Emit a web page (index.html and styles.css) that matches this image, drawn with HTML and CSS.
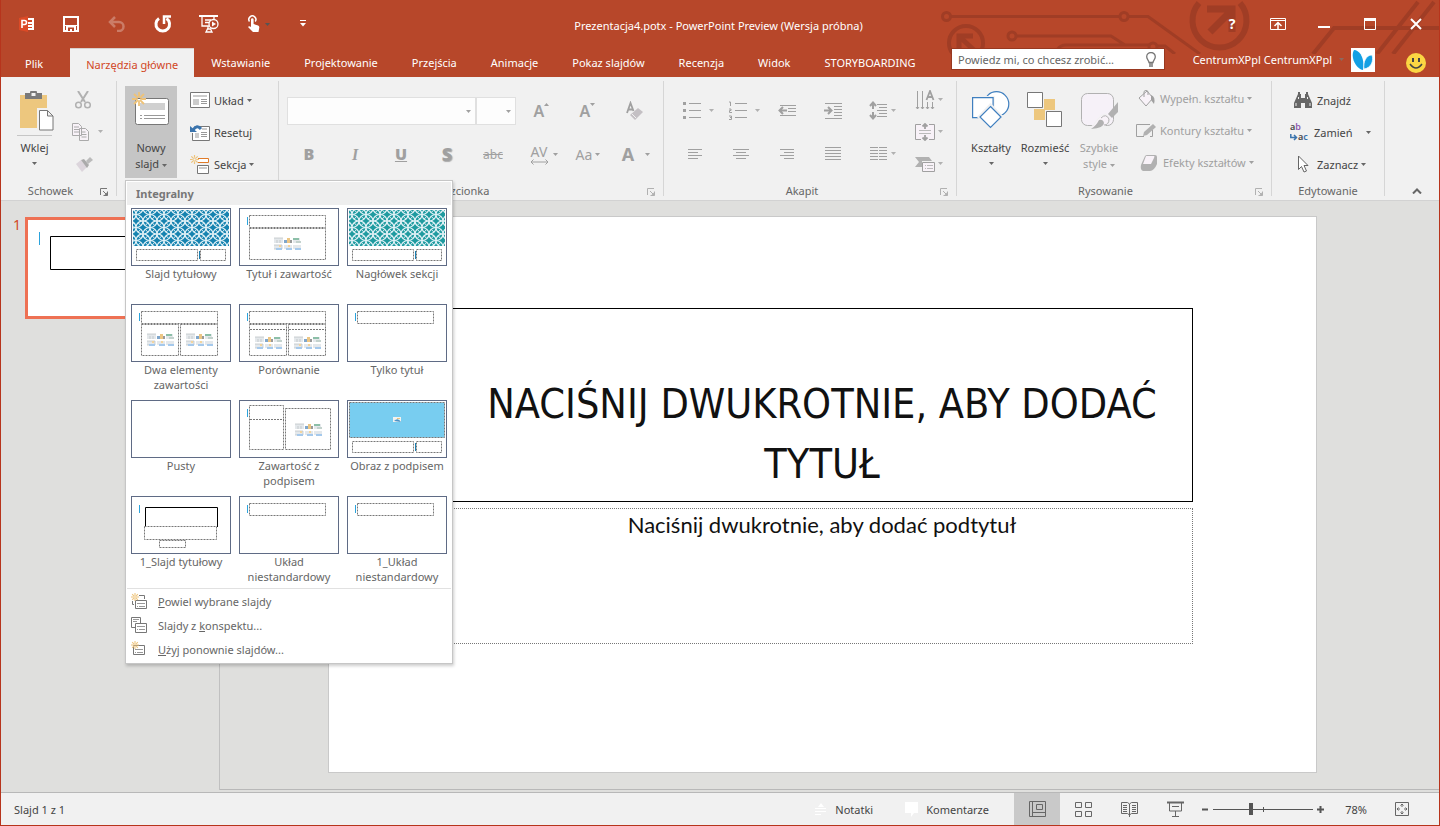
FILE: index.html
```html
<!DOCTYPE html>
<html lang="pl">
<head>
<meta charset="utf-8">
<title>Prezentacja4.potx - PowerPoint Preview (Wersja próbna)</title>
<link rel="stylesheet" href="styles.css">
</head>
<body>
<svg class="defs" aria-hidden="true">
  <defs>
    <symbol id="caret" viewBox="0 0 5 3"><path d="M0 0h5L2.500 3z" fill="currentColor"/></symbol>
    <symbol id="launch" viewBox="0 0 8 8"><path d="M.5 7V.5H7M3 3l4 4M7.500 3.500v4h-4" fill="none" stroke="currentColor"/><path d="M7.500 4v3.500H4z" fill="currentColor"/></symbol>
    <symbol id="media" viewBox="0 0 28 13">
      <path d="M0 1h9v5H0zM19 1h7v5h-7zM0 8h8v4H0zM10 8h8v4h-8zM19 8h8v4h-8z" fill="#e4e8eb"/>
      <path d="M0 1h9M3 3v3M6 3v3M0 8h8v4H0" stroke="#b8bdc0" fill="none" stroke-width=".7"/>
      <path d="M10 3h3v3h-3z" fill="#7fa6cc"/><path d="M13 1h3v5h-3z" fill="#ecc684"/><path d="M16 3h2v3h-2z" fill="#999"/>
      <path d="M19 1h6v2h-6z" fill="#8cbfa8"/><path d="M22 4h5v2h-5z" fill="#c3d2cd"/>
      <path d="M2 11h6v2H2zM12 11h6v2h-6zM21 11h6v2h-6z" fill="#a5c9ec"/><path d="M5 8h2v2H5zM14 8h2v2h-2z" fill="#f3d49c"/>
    </symbol>
    <symbol id="titlebox" viewBox="0 0 98 56"><path d="M9.500 6.500h76v12h-76z" class="dash"/><path d="M7.500 8v8" stroke="#2ba3dc"/></symbol>
    <symbol id="footer" viewBox="0 0 98 56"><path d="M4.500 40.500h61v11h-61zM68.500 40.500h25v11h-25z" class="dash"/><path d="M67.500 42v8" stroke="#1c7fb0"/></symbol>
    <symbol id="star" viewBox="0 0 14 14"><path d="M7 0v4M7 10v4M0 7h4M10 7h4M2 2l3 3M9 9l3 3M12 2L9 5M5 9l-3 3" stroke="#eec37a" stroke-width="1.800" fill="none"/><circle cx="7" cy="7" r="2.200" fill="none" stroke="#eec37a" stroke-width="1.500"/></symbol>
    <pattern id="lattice" x="4" y="-1" width="14" height="13" patternUnits="userSpaceOnUse">
      <g fill="none" stroke="#e4f2f7" stroke-width="1.200">
        <ellipse cx="0" cy="0" rx="7" ry="6.500"/><ellipse cx="14" cy="0" rx="7" ry="6.500"/><ellipse cx="0" cy="13" rx="7" ry="6.500"/><ellipse cx="14" cy="13" rx="7" ry="6.500"/><ellipse cx="7" cy="6.500" rx="7" ry="6.500"/>
        <path d="M2 1.700l3 3M9 8.200l3 3M12 1.700l-3 3M5 8.200l-3 3" stroke-width="1"/>
      </g>
    </pattern>
  </defs>
</svg>
<div class="window">
  <header class="header">
    <svg class="circuit" width="520" height="54" viewBox="0 0 520 54" fill="none" stroke="#a03d25" stroke-width="3" aria-hidden="true">
      <path d="M32 16.500h169M210 16.500h19L281 54M98 36h94l14 9M138 50q3-5 9-5h83M238 46h8l10 8"/>
      <circle cx="27.500" cy="16.500" r="4"/><circle cx="205" cy="16.500" r="4"/><circle cx="93" cy="36" r="4"/><circle cx="234" cy="47" r="4"/>
      <circle cx="47" cy="43" r="17" stroke-width="4"/><path d="M57 52L42 38M40 50V36h14" stroke-width="5"/>
      <path d="M280 3a27 27 0 1041 0" stroke-width="6"/><path d="M291 32l22-22M288 9h25v23" stroke-width="7"/>
      <path d="M394 54l21-26h105M458 54L499 2M474 54L515 2" stroke-width="4"/>
    </svg>
    <div class="titlebar">
      <div class="quick">
        <button class="q q-app" aria-label="PowerPoint"><svg width="16" height="16" viewBox="0 0 16 16"><path d="M0 2l9-2v16l-9-2z" fill="#dc4a26"/><path d="M9 2h6v12H9z" fill="#fff"/><path d="M9 4h4v2H9zM9 8h4v1H9zM9 11h4v1H9z" fill="#d24726"/><path d="M3 12V4.500h2.500a2 2 0 010 4H3" fill="none" stroke="#fff" stroke-width="1.600"/></svg></button>
        <button class="q" aria-label="Zapisz"><svg width="16" height="16" viewBox="0 0 16 16"><path d="M1 1h14v14H1z" fill="none" stroke="#fff" stroke-width="2"/><path d="M1 9.500h14" stroke="#fff"/><path d="M3 10h10v5H3z" fill="#fff"/><path d="M5 11.500h6V15H9v-2H7v2H5z" fill="#b7472a"/></svg></button>
        <button class="q" aria-label="Cofnij"><svg width="18" height="16" viewBox="0 0 18 16" fill="none" stroke="#cb7c67" stroke-width="2.500"><path d="M7 1L2 6l5 5M2 6h9a4.500 4.500 0 010 9H9"/></svg></button>
        <button class="q" aria-label="Ponów"><svg width="18" height="18" viewBox="0 0 18 18" fill="none" stroke="#fff" stroke-width="3"><path d="M5 3.500a6.800 6.800 0 107.500 0"/><path d="M10 9V1.500h7" stroke-width="2.500"/></svg></button>
        <button class="q" aria-label="Pokaz slajdów"><svg width="20" height="18" viewBox="0 0 20 18" fill="none" stroke="#fff" stroke-width="1.300"><path d="M0 1h19" stroke-width="2"/><path d="M3 2v9h7M15 2v2M6 5h6M6 7.500h4M9 11v3"/><circle cx="14.500" cy="9" r="4.500"/><path d="M13 6.500v5l4-2.500z" fill="#fff" stroke="none"/><path d="M7 17l1.500-3h3l1.500 3z"/></svg></button>
        <button class="q q-touch" aria-label="Tryb dotyku"><svg width="24" height="18" viewBox="0 0 24 18"><path d="M5 10V4.500a1.300 1.300 0 012.600 0V9l4.500 1.500q1.400.5 1.200 2L12.500 17H7l-5-5q1-1.500 3 0z" fill="#fff"/><path d="M3.500 6.500a3.500 3.500 0 115.700 0" fill="none" stroke="#fff" stroke-width="1.500"/><path d="M19 8h5l-2.500 3z" fill="#555"/></svg></button>
        <button class="q" aria-label="Dostosuj pasek"><svg width="6" height="7" viewBox="0 0 6 7"><path d="M0 .5h6" stroke="#fff"/><path d="M0 3h6L3 6.500z" fill="#fff"/></svg></button>
      </div>
      <h1 class="doc-title">Prezentacja4.potx - PowerPoint Preview (Wersja próbna)</h1>
      <div class="wincontrols">
        <button class="q help" aria-label="Pomoc">?</button>
        <button class="q" aria-label="Opcje wstążki"><svg width="16" height="12" viewBox="0 0 16 12" fill="none" stroke="#fff"><path d="M.5.5h15v11H.5zM0 2.500h16"/><path d="M8 11V5M4.500 8L8 4.500 11.500 8" stroke-width="1.500"/></svg></button>
        <button class="q" aria-label="Minimalizuj"><svg width="12" height="12" viewBox="0 0 12 12"><path d="M0 8h12v2H0z" fill="#fff"/></svg></button>
        <button class="q" aria-label="Maksymalizuj"><svg width="12" height="12" viewBox="0 0 12 12"><path d="M.5 1v10.500h11V1" fill="none" stroke="#fff"/><path d="M0 0h12v3H0z" fill="#fff"/></svg></button>
        <button class="q" aria-label="Zamknij"><svg width="12" height="12" viewBox="0 0 12 12"><path d="M1 1l10 10M11 1L1 11" stroke="#fff" stroke-width="2"/></svg></button>
      </div>
    </div>
    <div class="tabrow">
      <nav class="tabs">
        <button class="tab tab-file">Plik</button>
        <button class="tab active">Narzędzia główne</button>
        <button class="tab">Wstawianie</button>
        <button class="tab">Projektowanie</button>
        <button class="tab">Przejścia</button>
        <button class="tab">Animacje</button>
        <button class="tab">Pokaz slajdów</button>
        <button class="tab">Recenzja</button>
        <button class="tab">Widok</button>
        <button class="tab">STORYBOARDING</button>
      </nav>
      <label class="tell"><input type="text" placeholder="Powiedz mi, co chcesz zrobić..." aria-label="Powiedz mi, co chcesz zrobić"><svg width="10" height="15" viewBox="0 0 10 15" fill="none" stroke="#777"><path d="M3 10.500c0-2-2.300-3-2.300-5.700a4.300 4.300 0 018.600 0c0 2.700-2.300 3.700-2.300 5.700z" stroke-width="1.300"/><path d="M3 12h4M3 14h4" stroke-width="1.500"/></svg></label>
      <button class="account">CentrumXPpl CentrumXPpl<svg class="caret" width="5" height="3"><use href="#caret"/></svg></button>
      <svg class="avatar" width="24" height="24" viewBox="0 0 24 24" role="img" aria-label="Avatar"><path d="M0 0h24v24H0z" fill="#fff"/><path d="M3 2c6 0 11 9 9 20C5 21-1 9 3 2z" fill="#14a0e4"/><path d="M21 7c-6 0-9 7-8 14 7-1 10-8 8-14z" fill="#14a0e4" stroke="#fff" stroke-width=".7"/></svg>
      <svg class="smile" width="20" height="20" viewBox="0 0 20 20" role="img" aria-label="Opinia"><circle cx="10" cy="10" r="10" fill="#fbd643"/><path d="M7 5v4M13 5v4" stroke="#444" stroke-width="2"/><path d="M4 11q6 8 12 0" fill="none" stroke="#444" stroke-width="1.500"/></svg>
    </div>
  </header>

  <section class="ribbon" aria-label="Wstążka">
    <div class="group g-clip">
      <div class="body">
        <button class="big paste"><svg width="36" height="40" viewBox="0 0 36 40"><path d="M1 4h27v33H1z" fill="#edc77e"/><path d="M6 2h5V1q0-1 1-1h5q1 0 1 1v1h5v6H6z" fill="#7a7a7a"/><path d="M12.500 2h4v3h-4z" fill="#f1f1f1"/><path d="M18 17h12l5 5v18H18z" fill="#f1f1f1"/><path d="M20.500 19.500h8l5.500 5.500v14H20.500zM28.500 19.500V25H34" fill="#fff" stroke="#777"/></svg><span class="split">Wklej</span><svg class="caret" width="5" height="3"><use href="#caret"/></svg></button>
        <div class="stack off">
          <button class="ico" aria-label="Wytnij"><svg width="22" height="18" viewBox="0 0 22 18" fill="none" stroke="#b1b1b1" stroke-width="1.500"><path d="M6 0l7 11M16 0L9 11" stroke-width="2"/><circle cx="6.500" cy="14" r="2.800"/><circle cx="15.500" cy="14" r="2.800"/></svg></button>
          <button class="ico" aria-label="Kopiuj"><svg width="32" height="18" viewBox="0 0 32 18"><path d="M.5.500h6l3 3v9h-9zM7.500 5.500h6l3 3v9h-9z" fill="#f8f2f8" stroke="#aaa"/><path d="M2 4h5M2 6.500h5M2 9h5M9.500 9h4M9.500 11.500h5M9.500 14h5" stroke="#aaa"/><path d="M26 7h5l-2.500 3z" fill="#b1b1b1"/></svg></button>
          <button class="ico" aria-label="Malarz formatów"><svg width="22" height="16" viewBox="0 0 22 16"><path d="M4 8l5-4 6 7-5 5z" fill="#dcd5dc"/><path d="M9 4l3-1 5 6-2 3z" fill="#aaa"/><path d="M14 5l4-4 3 3-5 4" fill="#bbb"/></svg></button>
        </div>
      </div>
      <div class="caption">Schowek<svg class="launch" width="8" height="8"><use href="#launch"/></svg></div>
    </div>

    <div class="group g-slides">
      <div class="body">
        <div class="newslide">
          <button class="big pressed" aria-expanded="true"><svg width="38" height="37" viewBox="0 0 38 37"><rect x="3.500" y="7.500" width="33" height="26" rx="2" fill="#fff" stroke="#777"/><path d="M8 12h25v7H8z" fill="#d0d0d0"/><path d="M12 24.500h21M12 27.500h21M8 24.500h2M8 27.500h2" stroke="#999"/><use href="#star" x="0" y="1" width="14" height="14"/></svg><span>Nowy<br>slajd <svg class="caret" width="5" height="3"><use href="#caret"/></svg></span></button>
          <div class="menu">
            <h2>Integralny</h2>
            <div class="gallery">
              <button class="card"><svg class="thumb" viewBox="0 0 98 56"><path d="M1 1h96v36H1z" fill="#1683b0"/><path d="M1 1h96v36H1z" fill="url(#lattice)"/><use href="#footer"/></svg>Slajd tytułowy</button>
              <button class="card"><svg class="thumb" viewBox="0 0 98 56"><use href="#titlebox"/><path d="M9.500 19.500h76v31h-76z" class="dash"/><use href="#media" x="34" y="28" width="28" height="13"/></svg>Tytuł i zawartość</button>
              <button class="card"><svg class="thumb" viewBox="0 0 98 56"><path d="M1 1h96v36H1z" fill="#1f9ba0"/><path d="M1 1h96v36H1z" fill="url(#lattice)"/><use href="#footer"/></svg>Nagłówek sekcji</button>
              <button class="card"><svg class="thumb" viewBox="0 0 98 56"><use href="#titlebox"/><path d="M9.500 19.500h37v31h-37zM48.500 19.500h37v31h-37z" class="dash"/><use href="#media" x="15" y="28" width="28" height="13"/><use href="#media" x="54" y="28" width="28" height="13"/></svg>Dwa elementy zawartości</button>
              <button class="card"><svg class="thumb" viewBox="0 0 98 56"><use href="#titlebox"/><path d="M9.500 19.500h37v31h-37zM48.500 19.500h37v31h-37zM10 24.500h37M49 24.500h37" class="dash"/><use href="#media" x="15" y="31" width="28" height="13"/><use href="#media" x="54" y="31" width="28" height="13"/></svg>Porównanie</button>
              <button class="card"><svg class="thumb" viewBox="0 0 98 56"><use href="#titlebox"/></svg>Tylko tytuł</button>
              <button class="card"><svg class="thumb" viewBox="0 0 98 56"></svg>Pusty</button>
              <button class="card"><svg class="thumb" viewBox="0 0 98 56"><path d="M9.500 4.500h34v44h-34zM10 18.500h34M45.500 7.500h45v41h-45z" class="dash"/><path d="M7.500 8v8" stroke="#2ba3dc"/><use href="#media" x="55" y="22" width="28" height="13"/></svg>Zawartość z podpisem</button>
              <button class="card"><svg class="thumb" viewBox="0 0 98 56"><path d="M1.500 1.500h95v35h-95z" fill="#78cdf0"/><path d="M1.500 1.500h95v35h-95z" class="dash"/><path d="M45 16h8v5h-8z" fill="#f2f2f0"/><path d="M46 20q4-4 7 1z" fill="#4c93c6"/><path d="M49 17h3v1h-3z" fill="#edc77e"/><use href="#footer"/></svg>Obraz z podpisem</button>
              <button class="card"><svg class="thumb" viewBox="0 0 98 56"><path d="M7.500 8v8" stroke="#2ba3dc"/><path d="M13.500 30V10.500h72V30" fill="none" stroke="#000"/><path d="M12.500 29.500h72v13h-72zM27.500 43.500h26v7h-26z" class="dash"/></svg>1_Slajd tytułowy</button>
              <button class="card"><svg class="thumb" viewBox="0 0 98 56"><use href="#titlebox"/></svg>Układ niestandardowy</button>
              <button class="card"><svg class="thumb" viewBox="0 0 98 56"><use href="#titlebox"/></svg>1_Układ niestandardowy</button>
            </div>
            <div class="commands">
              <button><svg width="16" height="16" viewBox="0 0 16 16"><path d="M4.500 7.500h11v8h-11z" fill="#fff" stroke="#777"/><path d="M6 10.500h8M6 13.500h1M8 13.500h6" stroke="#999"/><path d="M8 2.500h5.500V6M1.500 8v3.500H3" fill="none" stroke="#777"/><use href="#star" width="8" height="8"/></svg><span><u>P</u>owiel wybrane slajdy</span></button>
              <button><svg width="16" height="16" viewBox="0 0 16 16"><path d="M.5.500h9v10h-9z" fill="#fff" stroke="#777"/><path d="M2 2.500h6M2 4.500h4" stroke="#999"/><path d="M4.500 6.500h11v9h-11z" fill="#fff" stroke="#777"/><path d="M6 9.500h8M6 12.500h1M8 12.500h6" stroke="#999"/></svg><span>Slajdy z <u>k</u>onspektu...</span></button>
              <button><svg width="16" height="16" viewBox="0 0 16 16"><path d="M2.500 4.500h11v9h-11z" fill="#fff" stroke="#777"/><path d="M4 8.500h8M4 11.500h1M6 11.500h6" stroke="#999"/><use href="#star" width="8" height="8"/></svg><span><u>U</u>żyj ponownie slajdów...</span></button>
            </div>
          </div>
        </div>
        <div class="stack rows">
          <button><svg width="20" height="16" viewBox="0 0 20 16"><path d="M.5.500h19v15H.5z" fill="#fff" stroke="#777"/><path d="M3 3h14v2H3zM3 7h6v6H3z" fill="#ccc"/><path d="M11 7.500h6M11 9.500h6M11 11.500h6" stroke="#999"/></svg>Układ<svg class="caret" width="5" height="3"><use href="#caret"/></svg></button>
          <button><svg width="20" height="17" viewBox="0 0 20 17"><path d="M4.500 2.500h15v14H2.500V9" fill="#fff" stroke="#777"/><path d="M5 9h4v5H5zM12 4h5v2h-5z" fill="#ccc"/><path d="M11 8.500h6M11 10.500h6M11 12.500h6" stroke="#999"/><path d="M3 6q4-6 8-1" fill="none" stroke="#3b74ad" stroke-width="3"/><path d="M0 2v6h7z" fill="#3b74ad"/></svg>Resetuj</button>
          <button><svg width="20" height="19" viewBox="0 0 20 19"><path d="M8 3.500h10.500v4H8" fill="#fff" stroke="#e07b28"/><path d="M7.500 10.500h11v8h-11z" fill="#fff" stroke="#777"/><path d="M9 12h8v2H9z" fill="#ccc"/><use href="#star" width="9" height="9"/></svg>Sekcja<svg class="caret" width="5" height="3"><use href="#caret"/></svg></button>
        </div>
      </div>
    </div>

    <div class="group g-font">
      <div class="body fontgrid off">
        <div class="combos">
          <span class="combo wide"><select aria-label="Czcionka" disabled><option></option></select><svg class="caret" width="5" height="3"><use href="#caret"/></svg></span>
          <span class="combo"><select aria-label="Rozmiar" disabled><option></option></select><svg class="caret" width="5" height="3"><use href="#caret"/></svg></span>
        </div>
        <button class="t16" aria-label="Zwiększ rozmiar">A<svg class="sup" width="5" height="3" viewBox="0 0 5 3"><path d="M0 3h5L2.500 0z" fill="#a0a0a0"/></svg></button>
        <button class="t16" aria-label="Zmniejsz rozmiar">A<svg class="sup" width="5" height="3"><use href="#caret"/></svg></button>
        <button class="clear" aria-label="Wyczyść formatowanie"><svg width="18" height="20" viewBox="0 0 18 20"><path d="M1 12L4.500 2l3 8M2.500 8.500h4" fill="none" stroke="#a0a0a0" stroke-width="1.800"/><path d="M4 14l8-7 5 4-8 8z" fill="#c4c0c4"/><path d="M6 13l4 4" stroke="#f1f1f1"/></svg></button>
        <button class="t16"><b>B</b></button>
        <button class="t16 ital"><i>I</i></button>
        <button class="t16"><b><u>U</u></b></button>
        <button class="t18 shadow"><b>S</b></button>
        <button class="t13"><s>abc</s></button>
        <button class="av">AV<svg width="19" height="6" viewBox="0 0 19 6"><path d="M1 3h17M3.500.500L1 3l2.500 2.500M15.500.500L18 3l-2.500 2.500" fill="none" stroke="#a0a0a0"/></svg><svg class="caret" width="5" height="3"><use href="#caret"/></svg></button>
        <button class="t15">Aa<svg class="caret" width="5" height="3"><use href="#caret"/></svg></button>
        <button class="t18 color">A<svg class="caret" width="5" height="3"><use href="#caret"/></svg></button>
      </div>
      <div class="caption">Czcionka<svg class="launch off" width="8" height="8"><use href="#launch"/></svg></div>
    </div>

    <div class="group g-para">
      <div class="body paragrid off">
        <div class="lines">
          <button aria-label="Punktory"><svg width="46" height="20" viewBox="0 0 46 20"><path d="M8 1h3v3H8zM8 8h3v3H8zM8 15h3v3H8z" fill="#a0a0a0"/><path d="M14 2.500h12M14 9.500h12M14 16.500h12" stroke="#a0a0a0"/><path d="M34 8h5l-2.500 3z" fill="#b1b1b1"/></svg></button>
          <button aria-label="Numerowanie"><svg width="46" height="20" viewBox="0 0 46 20" fill="none" stroke="#a0a0a0"><path d="M8 1h1.500v4M8 8h2v1.500H8.500v2H11M8 15h2.500v3.500H8M9 16.500h1.500M14 2.500h12M14 9.500h12M14 16.500h12"/><path d="M34 8h5l-2.500 3z" fill="#b1b1b1" stroke="none"/></svg></button>
          <button aria-label="Zmniejsz wcięcie"><svg width="46" height="20" viewBox="0 0 46 20"><path d="M13 4.500h16M21 7.500h8M21 10.500h8M13 14.500h16" stroke="#a0a0a0"/><path d="M20 9.500h-7M16 6l-3.500 3.500L16 13" fill="none" stroke="#a0a0a0" stroke-width="2"/></svg></button>
          <button aria-label="Zwiększ wcięcie"><svg width="46" height="20" viewBox="0 0 46 20"><path d="M12 2.500h17M21 5.500h8M21 8.500h8M21 11.500h8M21 14.500h8M12 17.500h17" stroke="#a0a0a0"/><path d="M11 9.500h7M15 6l3.500 3.500L15 13" fill="none" stroke="#a0a0a0" stroke-width="2"/></svg></button>
          <button aria-label="Interlinia"><svg width="46" height="20" viewBox="0 0 46 20"><path d="M18 3.500h10M20 6.500h8M18 9.500h10M20 12.500h8M18 15.500h10" stroke="#a0a0a0"/><path d="M14 2v6M11 5l3-3.500L17 5M14 11v6M11 14l3 3.500 3-3.500" fill="none" stroke="#a0a0a0" stroke-width="2"/><path d="M32 8h5l-2.500 3z" fill="#b1b1b1"/></svg></button>
          <button aria-label="Do lewej"><svg width="46" height="20" viewBox="0 0 46 20"><path d="M13 5.500h14M13 8.500h10M13 11.500h14M13 14.500h10" stroke="#a0a0a0"/></svg></button>
          <button aria-label="Do środka"><svg width="46" height="20" viewBox="0 0 46 20"><path d="M12 5.500h16M15 8.500h10M12 11.500h16M15 14.500h10" stroke="#a0a0a0"/></svg></button>
          <button aria-label="Do prawej"><svg width="46" height="20" viewBox="0 0 46 20"><path d="M13 5.500h14M17 8.500h10M13 11.500h14M17 14.500h10" stroke="#a0a0a0"/></svg></button>
          <button aria-label="Wyjustuj"><svg width="46" height="20" viewBox="0 0 46 20"><path d="M12 3.500h16M12 6.500h16M12 9.500h16M12 12.500h16M12 15.500h16" stroke="#a0a0a0"/></svg></button>
          <button aria-label="Kolumny"><svg width="46" height="20" viewBox="0 0 46 20"><path d="M11 3.500h8M11 6.500h8M11 9.500h8M11 12.500h8M11 15.500h8M20 3.500h8M20 6.500h8M20 9.500h8M20 12.500h8M20 15.500h8" stroke="#a0a0a0"/><path d="M32 8h5l-2.500 3z" fill="#b1b1b1"/></svg></button>
        </div>
        <div class="stack">
          <button class="ico" aria-label="Kierunek tekstu"><svg width="28" height="20" viewBox="0 0 28 20" fill="none" stroke="#a0a0a0"><path d="M2.500 1v18M7.500 1v18M12.500 12v7M17.500 12v7M1 17l1.500 2L4 17M6 17l1.500 2L9 17M11 17l1.500 2 1.500-2M16 17l1.500 2 1.500-2"/><path d="M11.500 10L15 1l3.500 9M13 7h4" stroke-width="1.800"/><path d="M23 8h5l-2.500 3z" fill="#b1b1b1" stroke="none"/></svg></button>
          <button class="ico" aria-label="Wyrównaj tekst"><svg width="28" height="18" viewBox="0 0 28 18"><path d="M1 1.500h18v15H1z" fill="#f8f2f8"/><path d="M6 1.500H.5v15H6M14 1.500h5.500v15H14" fill="none" stroke="#a0a0a0"/><path d="M4 7.500h12M4 10.500h12" stroke="#bbb"/><path d="M10 1v5M7.500 3.500L10 1l2.500 2.500M10 12v5M7.500 14.500L10 17l2.500-2.500" fill="none" stroke="#a0a0a0" stroke-width="1.800"/><path d="M23 7h5l-2.500 3z" fill="#b1b1b1"/></svg></button>
          <button class="ico" aria-label="SmartArt"><svg width="28" height="16" viewBox="0 0 28 16"><path d="M0 1h14l3 4H7v6H0l4-5z" fill="#b1b1b1"/><path d="M7.500 6.500h12v9h-12z" fill="#f8f2f8" stroke="#a0a0a0"/><path d="M10 9.500h1M12 9.500h6M10 12.500h1M12 12.500h6" stroke="#bbb"/><path d="M23 6h5l-2.500 3z" fill="#b1b1b1"/></svg></button>
        </div>
      </div>
      <div class="caption">Akapit<svg class="launch off" width="8" height="8"><use href="#launch"/></svg></div>
    </div>

    <div class="group g-draw">
      <div class="body">
        <button class="big"><svg width="38" height="38" viewBox="0 0 38 38" fill="#fff" stroke="#3f7fbf" stroke-width="1.200"><circle cx="24.500" cy="13" r="12.300"/><path d="M.6 6.600h20.500v20H.6z" stroke="#f1f1f1" stroke-width="3"/><path d="M.6 6.600h20.500v20H.6z"/><path d="M18.500 14l11.500 12-11.500 11.500L7 26z" stroke="#f1f1f1" stroke-width="3"/><path d="M18.500 15.500l10.500 10.500-10.500 10.500L8 26z"/></svg><span>Kształty</span><svg class="caret" width="5" height="3"><use href="#caret"/></svg></button>
        <button class="big"><svg width="36" height="38" viewBox="0 0 36 38"><path d="M17 8h11v11H17zM7 18h11v11H7z" fill="#edc77e"/><path d="M.5 1.500h15v15H.5zM19.500 20.500h15v15h-15z" fill="#fff" stroke="#777"/></svg><span>Rozmieść</span><svg class="caret" width="5" height="3"><use href="#caret"/></svg></button>
        <button class="big off"><svg width="38" height="38" viewBox="0 0 38 38"><rect x="1.500" y="2.500" width="32" height="32" rx="6" fill="#f6f1f8" stroke="#b1b1b1"/><path d="M38 11v10l-6 6-4-4z" fill="#b1b1b1"/><path d="M26 23l5 5q-4 10-22 9 5-2 8-8 4-6 9-6z" fill="#f8f2f8" stroke="#f1f1f1"/><path d="M11 38q5-3 8-9 4-1 5 3 0 5-13 6z" fill="#b1b1b1"/><path d="M21 27q5-5 8 1 0 6-5 6" fill="none" stroke="#b1b1b1"/></svg><span>Szybkie<br>style <svg class="caret" width="5" height="3"><use href="#caret"/></svg></span></button>
        <div class="stack rows off">
          <button><svg width="20" height="16" viewBox="0 0 20 16"><path d="M3 8l8-7 6 7-7 8z" fill="#f8f2f8" stroke="#a0a0a0"/><path d="M8 7V1.500q2-3 4 0V5" fill="none" stroke="#a0a0a0"/><path d="M15 5q5 2 3 9l-3-4z" fill="#a0a0a0"/></svg>Wypełn. kształtu<svg class="caret" width="5" height="3"><use href="#caret"/></svg></button>
          <button><svg width="20" height="15" viewBox="0 0 20 15"><path d="M14 1.500H.5v12H8M16.500 7v6.500H14" fill="none" stroke="#a0a0a0"/><path d="M7 13l1-4 9-8 3 3-9 8z" fill="#b1b1b1"/></svg>Kontury kształtu<svg class="caret" width="5" height="3"><use href="#caret"/></svg></button>
          <button class="fx"><svg width="20" height="17" viewBox="0 0 20 17"><path d="M2 11L6 2q1-1 2-1h8q2 0 2 2v7q-3 7-7 7H4q-3-1-2-6z" fill="#b1b1b1"/><path d="M7 2h8q1 0 0 2l-3 6H4z" fill="#f8f2f8"/></svg>Efekty kształtów<svg class="caret" width="5" height="3"><use href="#caret"/></svg></button>
        </div>
      </div>
      <div class="caption">Rysowanie<svg class="launch off" width="8" height="8"><use href="#launch"/></svg></div>
    </div>

    <div class="group g-edit">
      <div class="body">
        <div class="stack rows">
          <button><svg width="20" height="17" viewBox="0 0 20 17"><path d="M5 2h3v4h4V2h3l4 9v5h-7v-5H8v5H1v-5z" fill="#666"/><path d="M5 0h2v3H5zM13 0h2v3h-2z" fill="#666"/><path d="M3 11v3M17 11v3M5.500 5v2M14.500 5v2" stroke="#f1f1f1"/></svg>Znajdź</button>
          <button class="swap"><span class="abac"><b>a<i>b</i></b><b><svg width="8" height="7" viewBox="0 0 8 7"><path d="M.8 0v3.500H6M4 1l2.500 2.500L4 6" fill="none" stroke="#3b74ad" stroke-width="1.500"/></svg>a<em>c</em></b></span>Zamień<svg class="caret far" width="5" height="3"><use href="#caret"/></svg></button>
          <button><svg width="20" height="18" viewBox="0 0 20 18"><path d="M5.500 1v13.500l3-3 2.500 5.500 2.500-1-2.500-5.500h4z" fill="#fff" stroke="#666"/></svg>Zaznacz<svg class="caret" width="5" height="3"><use href="#caret"/></svg></button>
        </div>
      </div>
      <div class="caption">Edytowanie</div>
    </div>
    <button class="collapse" aria-label="Zwiń wstążkę"><svg width="10" height="6" viewBox="0 0 10 6"><path d="M1 5.500l4-4 4 4" fill="none" stroke="#666" stroke-width="2"/></svg></button>
  </section>

  <main class="work">
    <aside class="pane">
      <span class="num">1</span>
      <svg class="mini" viewBox="0 0 171 96" role="img" aria-label="Slajd 1"><path d="M11.500 12v13" stroke="#2ba3dc"/><path d="M22.500 16.500h127v33h-127z" fill="none" stroke="#000"/></svg>
    </aside>
    <div class="editor">
      <article class="slide">
        <h2 class="slide-title">NACIŚNIJ DWUKROTNIE, ABY DODAĆ TYTUŁ</h2>
        <p class="slide-sub">Naciśnij dwukrotnie, aby dodać podtytuł</p>
      </article>
    </div>
  </main>

  <footer class="status">
    <span class="count">Slajd 1 z 1</span>
    <button class="notes"><svg width="12" height="14" viewBox="0 0 12 14"><path d="M3 5h6L6 1zM0 6h11v1H0zM0 9h11v1H0zM0 12h6v1H0z" fill="#fff"/></svg>Notatki</button>
    <button class="notes"><svg width="13" height="15" viewBox="0 0 13 15"><path d="M0 0h13v11H9l-3 4v-4H0z" fill="#fff"/></svg>Komentarze</button>
    <div class="views">
      <button class="on" aria-label="Normalny"><svg width="17" height="16" viewBox="0 0 17 16" fill="none" stroke="#666"><path d="M.5.500h16v15H.5zM3.500 0v16M4 11.500h12M7.500 3.500h6v5h-6z"/></svg></button>
      <button aria-label="Sortowanie"><svg width="17" height="16" viewBox="0 0 17 16" fill="none" stroke="#666"><path d="M.5 1.500h6v5h-6zM10.500 1.500h6v5h-6zM.5 10.500h6v5h-6zM10.500 10.500h6v5h-6z"/></svg></button>
      <button aria-label="Czytanie"><svg width="17" height="16" viewBox="0 0 17 16" fill="none" stroke="#666"><path d="M.5 1.500h6l2 1.500 2-1.500h6v11h-6l-2 1.500-2-1.500h-6zM8.500 3v13M2 4.500h4M2 6.500h4M2 8.500h4M2 10.500h4M11 4.500h4M11 6.500h4M11 8.500h4M11 10.500h4"/></svg></button>
      <button aria-label="Pokaz slajdów"><svg width="17" height="16" viewBox="0 0 17 16" fill="none" stroke="#666"><path d="M0 1.500h17" stroke-width="2"/><path d="M2.500 2v8h12V2M5 5.500h7M8.500 10v5M5 15.500h7"/></svg></button>
    </div>
    <button class="pm" aria-label="Pomniejsz"><svg width="9" height="9" viewBox="0 0 9 9"><path d="M1 4.500h6" stroke="#555" stroke-width="2"/></svg></button>
    <input class="zoom" type="range" min="0" max="100" value="38" aria-label="Powiększenie">
    <button class="pm" aria-label="Powiększ"><svg width="9" height="9" viewBox="0 0 9 9"><path d="M1 4.500h7M4.500 1v7" stroke="#555" stroke-width="2"/></svg></button>
    <button class="pct">78%</button>
    <button class="fit" aria-label="Dopasuj"><svg width="14" height="14" viewBox="0 0 14 14" fill="none" stroke="#666"><path d="M.5.500h13v13H.5zM7 2v3M7 9v3M2 7h3M9 7h3M5.500 3.500L7 2l1.500 1.500M5.500 10.500L7 12l1.500-1.500M3.500 5.500L2 7l1.500 1.500M10.500 5.500L12 7l-1.500 1.500"/></svg></button>
  </footer>
</div>
</body>
</html>
```
FILE: styles.css
```css
* { box-sizing: border-box; }
body { margin: 0; font: 11px/15px "Noto Sans", "Open Sans", sans-serif; color: #444; }
button, input, select { font: inherit; color: inherit; background: none; border: 0; padding: 0; margin: 0; }
button { display: flex; align-items: center; white-space: nowrap; }
h1, h2, p { margin: 0; font-weight: 400; }
.defs { position: absolute; width: 0; height: 0; }
.dash { fill: none; stroke: #777; stroke-dasharray: 2 1; }
.caret { flex: none; color: #666; }
.off, .off .caret { color: #a0a0a0; }

.window { display: flex; flex-direction: column; height: 100vh; border: 1px solid #b7341c; border-top: 0; background: #dfdfdd; }

.header { position: relative; background: #b7472a; color: #fff; }
.circuit { position: absolute; right: 0; top: 0; }
.titlebar, .tabrow { position: relative; display: flex; }
.titlebar { height: 47px; align-items: center; }
.quick, .wincontrols { display: flex; flex: 1; }
.quick { padding-left: 3px; }
.wincontrols { justify-content: flex-end; }
.q { width: 46px; height: 46px; justify-content: center; }
.q-app { width: 44px; padding-left: 2px; }
.q-touch { width: 48px; padding-left: 4px; }
.help { font-weight: 700; font-size: 14px; }
.doc-title { font-size: 11px; line-height: 15px; padding: 4px 6px 0 0; }
.tabrow { height: 30px; align-items: flex-start; padding-right: 13px; }
.tabs { display: flex; flex: 1; padding: 1px 0 0 6px; }
.tab { height: 29px; padding: 2px 17px; color: #fff; }
.tab-file { padding: 2px 27px 0 18px; }
.tab.active { background: #f1f1f1; color: #d24726; padding: 2px 16px 0; border-top: 1px solid #d8cfcc; }
.tell { display: flex; flex: none; align-items: center; width: 214px; height: 22px; margin-top: 1px; border: 1px solid #983820; background: #fff; padding: 0 8px 0 6px; }
.tell input { flex: 1; min-width: 0; outline: 0; color: #444; }
.tell input::placeholder { color: #666; opacity: 1; }
.account { width: 157px; justify-content: flex-end; height: 25px; margin-left: 22px; gap: 7px; color: #fff; }
.account .caret { color: #8c6a60; }
.avatar { margin: 1px 0 0 7px; flex: none; }
.smile { margin: 6px 0 0 31px; flex: none; }

.ribbon { display: flex; height: 124px; background: #f1f1f1; border-bottom: 1px solid #d2d2d2; }
.group { display: flex; flex-direction: column; padding-top: 5px; border-right: 1px solid #d6d6d6; margin: 4px 0; }
.body { display: flex; flex: 1; align-items: flex-start; }
.caption { position: relative; height: 13px; text-align: center; color: #666; padding-right: 16px; }
.launch { position: absolute; right: 8px; top: 5px; color: #777; }
.launch.off { color: #b1b1b1; }
.g-clip { width: 116px; }
.g-slides { width: 162px; padding-left: 8px; }
.g-font { width: 385px; padding-left: 7px; }
.g-para { width: 293px; }
.g-draw { width: 315px; padding-left: 7px; }
.g-draw .caption { padding-right: 24px; }
.g-draw .launch { right: 8px; }
.g-edit { width: 113px; }
.g-edit .caption { padding-right: 0; }
.big { flex-direction: column; height: 92px; width: 54px; text-align: center; padding-top: 5px; line-height: 16px; }
.big > svg:first-child { margin-bottom: 11px; flex: none; }
.big span .caret { vertical-align: middle; }
.big > .caret { margin-top: 6px; }
.pressed > svg:first-child { margin-bottom: 12px; }
.paste { width: 67px; }
.paste > svg:first-child { margin: 0 0 4px 5px; }
.split { border-top: 1px solid #c6c6c6; padding: 4px 4px 0; }
.stack { display: grid; grid-template-rows: repeat(3, 32px); margin-top: -2px; }
.ico { height: 32px; }
.g-clip .stack { padding-left: 4px; }
.rows button { gap: 4px; text-align: left; }
.rows .caret { margin-left: -1px; }
.g-slides .rows { padding-left: 13px; }
.g-draw .rows { padding-left: 10px; margin-top: -4px; }
.g-draw .fx { padding-left: 3px; }
.g-edit .rows { padding-left: 21px; }
.g-edit .swap { gap: 4px; margin-left: -3px; }
.rows .far { margin-left: 9px; }
.abac { display: grid; grid-template-rows: 10px 10px; font-size: 9px; line-height: 10px; width: 20px; }
.abac b { display: flex; align-items: center; font-weight: 600; }
.abac i { font-style: normal; color: #8e5bb0; }
.abac em { font-style: normal; color: #3b74ad; }

.newslide { position: relative; }
.pressed { width: 52px; background: #c5c5c5; }
.menu { position: absolute; z-index: 5; left: 0; top: calc(100% + 2px); width: 328px; padding: 1px; background: #fff; border: 1px solid #c6c6c6; box-shadow: 1px 2px 3px rgba(0, 0, 0, .2); }
.menu h2 { background: #eee; font-size: 11px; line-height: 23px; font-weight: 700; color: #777; padding-left: 9px; }
.gallery { display: grid; grid-template-columns: repeat(3, 100px); grid-auto-rows: 96px; column-gap: 8px; padding: 3px 4px 0; border-bottom: 1px solid #e1e1e1; height: 384px; }
.card { flex-direction: column; white-space: normal; line-height: 15px; color: #666; text-align: center; }
.thumb { flex: none; width: 100px; height: 58px; border: 1px solid #5f6b85; background: #fff; }
.commands { padding: 0 0 1px 4px; color: #666; }
.commands button { height: 24px; gap: 11px; }

.fontgrid { display: grid; grid-template-columns: repeat(8, 46px); grid-template-rows: 28px 28px; row-gap: 15px; padding-top: 11px; align-content: start; align-items: stretch; }
.fontgrid button { position: relative; justify-content: center; }
.combos { grid-column: span 5; display: flex; }
.combo { position: relative; width: 40px; height: 28px; border: 1px solid #e0e0e0; background: #fdfdfd; }
.combo.wide { width: 190px; margin-left: 1px; }
.combo select { width: 100%; height: 100%; appearance: none; opacity: 1; }
.combo .caret { position: absolute; right: 4px; top: 12px; }
.fontgrid .sup { position: absolute; left: 28px; top: 6px; }
.fontgrid .clear { padding-left: 8px; }
.t16 { font-size: 16px; font-weight: 600; }
.t15 { font-size: 14px; }
.t13 { font-size: 12px; }
.t18 { font-size: 18px; font-weight: 700; }
.ital { font-family: "Liberation Serif", serif; font-weight: 700; }
.shadow { text-shadow: 1px 1px 1px #aaa; }
.fontgrid .av { flex-direction: column; font-size: 14px; line-height: 15px; }
.av .caret { position: absolute; right: 4px; top: 13px; }
.fontgrid .t15 { padding-left: 6px; }
.t15 .caret { margin-left: 3px; }
.fontgrid .color { padding-left: 10px; }
.color .caret { margin-left: 11px; }

.paragrid .lines { display: grid; grid-template-columns: repeat(5, 46px); grid-template-rows: 20px 20px; row-gap: 23px; padding: 15px 0 0 11px; }
.paragrid .stack { padding-left: 10px; }
.collapse { margin: auto 17px 6px auto; }

.work { display: flex; flex: 1; min-height: 0; border-bottom: 1px solid #b8b8b8; padding-bottom: 2px; }
.pane { display: flex; width: 219px; gap: 3px; padding: 16px 0 0 12px; border-right: 1px solid #c0c0c0; }
.num { width: 9px; font-size: 14px; color: #d24726; }
.mini { align-self: flex-start; width: 177px; background: #fff; border: 3px solid #ee7154; }
.editor { flex: 1; border-bottom: 1px solid #b8b8b8; padding: 15px 122px 0 108px; }
.slide { aspect-ratio: 988 / 556; background: #fff; border: 1px solid #c9c9c9; padding: 91px 123px 0 122px; color: #111; text-align: center; }
.slide-title { display: flex; align-items: flex-end; height: 194px; border: 1px solid #000; padding: 0 24px 7px; font: 41px/60px "DejaVu Sans Condensed", sans-serif; }
.slide-sub { height: 136px; margin-top: 6px; border: 1px dotted #777; font: 22px/31px Lato, sans-serif; }

.status { display: flex; align-items: center; height: 32px; background: #f1f1f1; padding-right: 30px; }
.count { flex: 1; padding-left: 13px; }
.notes { gap: 8px; margin-right: 32px; }
.notes + .views { margin-left: -7px; }
.views { display: flex; align-self: stretch; }
.views button { width: 46px; justify-content: center; }
.views .on { background: #c9c9c9; }
.pm { padding: 0 3px; }
.zoom { appearance: none; width: 100px; height: 16px; background: linear-gradient(#555, #555) 50px 50% / 1px 5px no-repeat, linear-gradient(#555, #555) 0 50% / 100% 1px no-repeat; }
.zoom::-webkit-slider-thumb { appearance: none; width: 4px; height: 12px; background: #555; }
.pct { width: 42px; justify-content: center; margin-left: 7px; }
.fit { margin-left: 18px; }
```
